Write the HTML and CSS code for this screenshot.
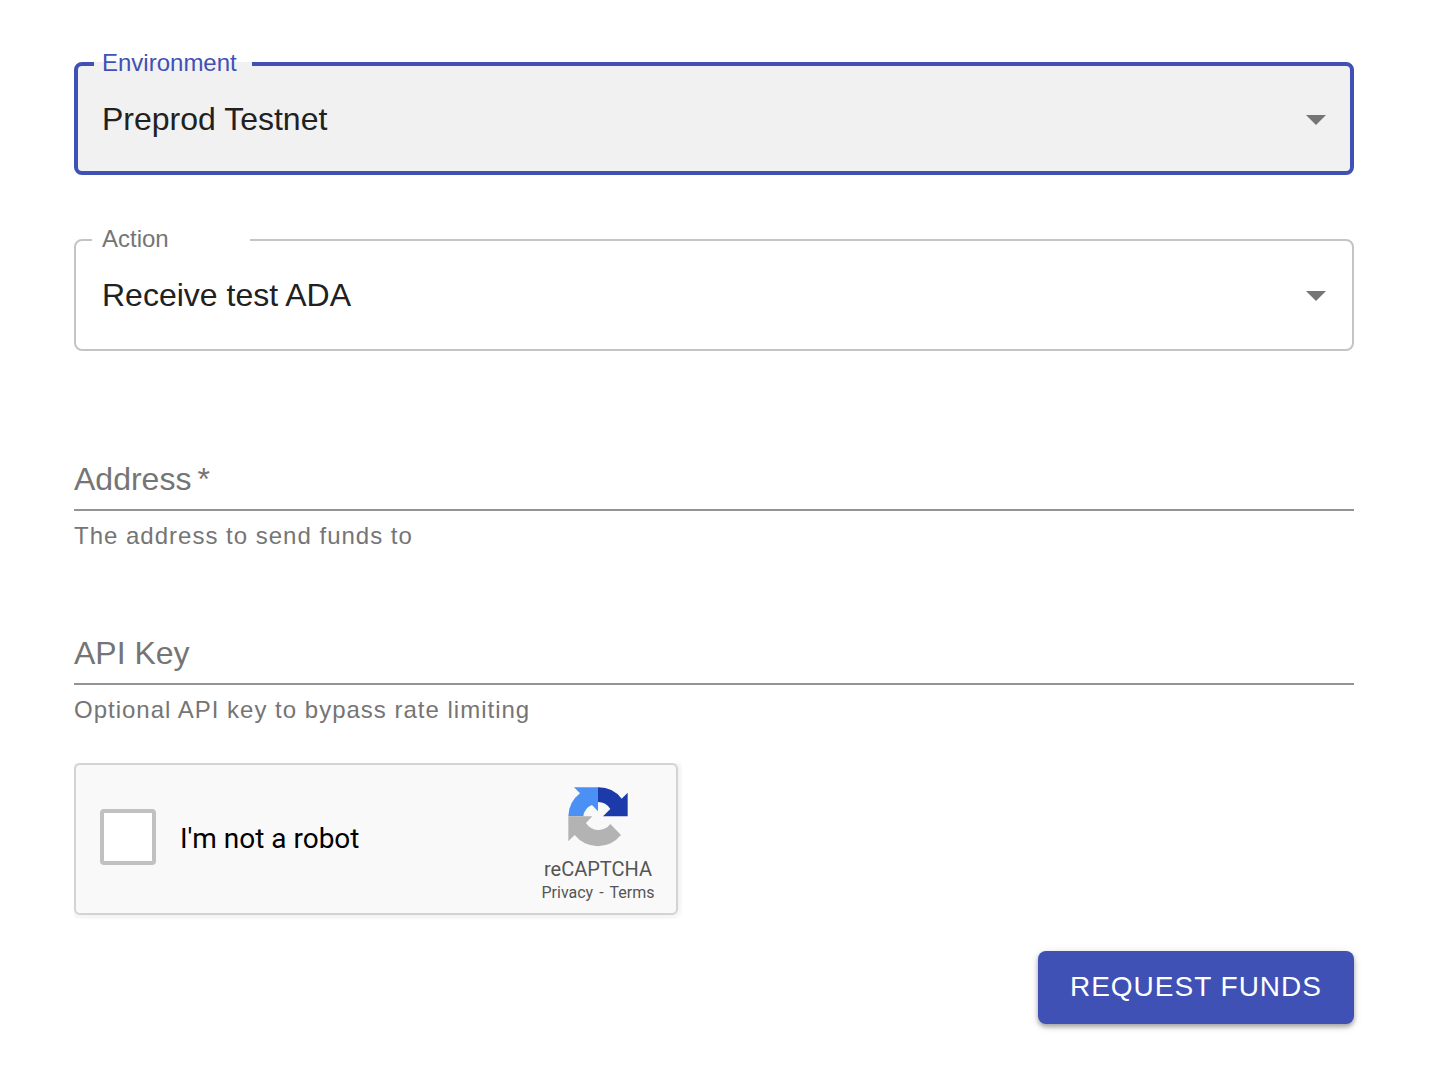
FILE: index.html
```html
<!DOCTYPE html>
<html lang="en">
<head>
  <meta charset="utf-8">
  <meta name="viewport" content="width=device-width, initial-scale=1">
  <title>Testnet faucet</title>
  <link rel="stylesheet" href="styles.css">
</head>
<body>
  <form class="faucet">
    <div class="selects">
      <fieldset class="outlined outlined-active">
        <legend class="outlined-legend"><label for="environment">Environment</label></legend>
        <div class="select-wrap">
          <select class="select" id="environment">
            <option>Preprod Testnet</option>
          </select>
          <svg class="select-arrow" viewBox="0 0 20 10" aria-hidden="true"><path d="M0 0h20L10 10z"/></svg>
        </div>
      </fieldset>
      <fieldset class="outlined">
        <legend class="outlined-legend"><label for="action">Action</label></legend>
        <div class="select-wrap">
          <select class="select" id="action">
            <option>Receive test ADA</option>
          </select>
          <svg class="select-arrow" viewBox="0 0 20 10" aria-hidden="true"><path d="M0 0h20L10 10z"/></svg>
        </div>
      </fieldset>
    </div>

    <div class="fields">
      <div class="field">
        <div class="field-control">
          <input class="field-input" id="address" type="text" required aria-describedby="address-help">
          <label class="field-label" for="address">Address<span class="required" aria-hidden="true">*</span></label>
        </div>
        <p class="field-help" id="address-help">The address to send funds to</p>
      </div>
      <div class="field">
        <div class="field-control">
          <input class="field-input" id="api-key" type="text" aria-describedby="api-key-help">
          <label class="field-label" for="api-key">API Key</label>
        </div>
        <p class="field-help" id="api-key-help">Optional API key to bypass rate limiting</p>
      </div>
    </div>

    <div class="captcha-frame">
      <div class="captcha">
        <input class="captcha-box" id="robot" type="checkbox">
        <label class="captcha-label" for="robot">I'm not a robot</label>
        <div class="captcha-brand">
          <svg class="captcha-logo" viewBox="36 35 180 180" aria-hidden="true">
            <path fill="#4a90f5" d="M54 36H126V108L108 89A42 42 0 0 0 82 123H37A89 89 0 0 1 72 54Z"/>
            <path fill="#1c3aa9" d="M126 36A88 88 0 0 1 197 70L215 52V123H141L163 101A44 44 0 0 0 126 80Z"/>
            <path fill="#b3b3b3" d="M37 123H109L90 143A44 44 0 0 0 163 146L195 179A89 89 0 0 1 56 179L37 198Z"/>
          </svg>
          <span class="captcha-name">reCAPTCHA</span>
          <span class="captcha-links"><a href="#privacy">Privacy</a><span class="captcha-dash"> - </span><a href="#terms">Terms</a></span>
        </div>
      </div>
    </div>

    <button class="submit" type="submit">REQUEST FUNDS</button>
  </form>
</body>
</html>
```
FILE: styles.css
```css
*,
*::before,
*::after {
  box-sizing: border-box;
}

body {
  margin: 0;
  background: #fff;
  color: #212121;
  font-family: "Liberation Sans", Helvetica, Arial, sans-serif;
}

.faucet {
  display: flex;
  flex-direction: column;
  padding: 52px 88px 54px 74px;
}

/* Outlined drop-downs */
.selects {
  display: grid;
  gap: 53px;
}

.outlined {
  min-width: 0;
  margin: 0;
  padding: 0 26px 9px 16px;
  border: 2px solid #c4c4c4;
  border-radius: 8px;
}

.outlined-active {
  padding: 0 24px 7px 16px;
  border: 4px solid #3f51b5;
  background: #f1f1f1;
}

.outlined-legend {
  width: 158px;
  padding: 0 10px 2px;
  color: #757575;
  font-size: 24px;
  line-height: 22px;
}

.outlined-active .outlined-legend {
  padding: 0 8px 2px;
  color: #3f51b5;
}

.select-wrap {
  display: grid;
  align-items: center;
  padding-left: 10px;
}

.outlined-active .select-wrap {
  padding-left: 8px;
}

.select,
.select-arrow {
  grid-area: 1 / 1;
}

.select {
  width: 100%;
  height: 88px;
  padding: 0 0 2px;
  border: 0;
  outline: 0;
  appearance: none;
  background: transparent;
  color: #212121;
  font: inherit;
  font-size: 32px;
}

.select-arrow {
  justify-self: end;
  width: 20px;
  height: 10px;
  fill: #757575;
  pointer-events: none;
}

/* Underlined text fields */
.fields {
  display: grid;
  gap: 64px;
  margin-top: 96px;
}

.field-control {
  display: grid;
  align-items: center;
}

.field-input,
.field-label {
  grid-area: 1 / 1;
}

.field-input {
  width: 100%;
  height: 64px;
  padding: 0;
  border: 0;
  border-bottom: 2px solid #949494;
  border-radius: 0;
  outline: 0;
  background: transparent;
  color: #212121;
  font: inherit;
  font-size: 32px;
}

.field-label {
  color: #757575;
  font-size: 32px;
  line-height: 32px;
  pointer-events: none;
}

.required {
  padding-left: 6px;
}

.field-help {
  margin: 6px 0 2px;
  color: #757575;
  font-size: 24px;
  letter-spacing: 1px;
  line-height: 38px;
}

/* Captcha */
.captcha-frame {
  width: 608px;
  max-width: 100%;
  margin-top: 32px;
  padding: 0 4px 4px 0;
  overflow: hidden;
}

.captcha {
  display: flex;
  align-items: center;
  padding: 22px 8px 6px 24px;
  border: 2px solid #d3d3d3;
  border-radius: 6px;
  background: #f9f9f9;
  box-shadow: 0 0 8px 2px rgba(0, 0, 0, 0.08);
  color: #555;
  font-family: Roboto, sans-serif;
}

.captcha-box {
  width: 56px;
  height: 56px;
  margin: 0 24px 20px 0;
  border: 4px solid #c1c1c1;
  border-radius: 4px;
  appearance: none;
  background: #fff;
}

.captcha-label {
  flex: 1;
  margin-bottom: 16px;
  color: #000;
  font-size: 28px;
  line-height: 32px;
}

.captcha-brand {
  display: flex;
  flex-direction: column;
  align-items: center;
  width: 140px;
}

.captcha-logo {
  width: 60px;
  height: 60px;
  margin-bottom: 12px;
}

.captcha-name {
  font-size: 20px;
  line-height: 20px;
}

.captcha-links {
  font-size: 16px;
  line-height: 28px;
}

.captcha-links a {
  color: inherit;
  text-decoration: none;
}

.captcha-dash {
  padding: 0 2px;
}

.submit {
  align-self: flex-end;
  margin-top: 32px;
  padding: 18px 32px 19px;
  border: 0;
  border-radius: 8px;
  background: #3f51b5;
  box-shadow: 0 3px 4px rgba(0, 0, 0, 0.28), 0 2px 10px rgba(0, 0, 0, 0.14);
  color: #fff;
  font: inherit;
  font-size: 28px;
  letter-spacing: 1px;
  line-height: 36px;
}
```
